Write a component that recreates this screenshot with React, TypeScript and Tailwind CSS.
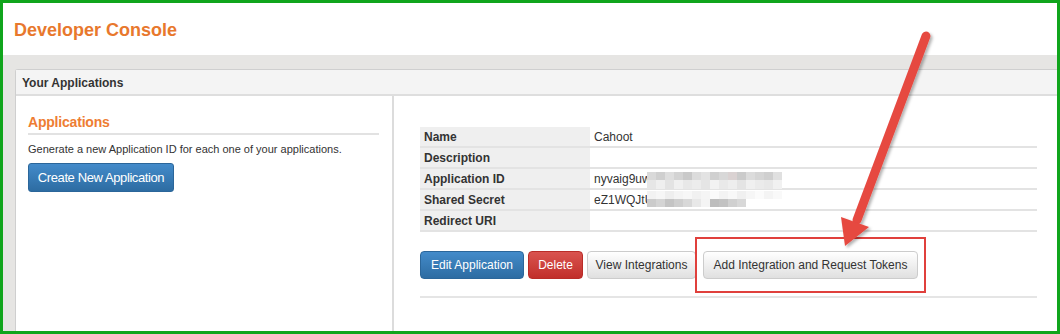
import React from "react";

const r1 = ["#d9d9d9","#cfcfcf","#dedede","#d3d3d3","#c9c9c9","#dcdcdc","#e3e3e3","#d0d0d0","#d8d8d8","#dad2d2","#cbcbcb","#dcdcdc","#d5d5d5","#cfcfcf","#e0e0e0"];
const r2 = ["#e6e6e6","#efefef","#e3e3e3","#f0f0f0","#e8e8e8","#ececec","#e5e5e5","#f2f2f2","#e9e9e9","#eeeeee","#e4e4e4","#f0f0f0","#ebebeb","#e8e8e8","#f1f1f1"];
const r3 = ["#f2f2f2","#f6f6f6","#eeeeee","#f4f4f4","#f7f7f7","#f1f1f1","#f5f5f5","#fafafa","#f3f3f3","#f8f8f8","#f0f0f0","#f6f6f6","#fbfbfb","#f4f4f4","#f9f9f9"];
const r4 = ["#cbcbcb","#d4d4d4","#c4c4c4","#cecece","#d8d8d8","#e8e8e8","#f4f4f4","#bdbdbd","#c2c2c2","#d0d0d0","#d8d8d8"];

const rows: [string, string][] = [
  ["Name", "Cahoot"],
  ["Description", ""],
  ["Application ID", "nyvaig9uw"],
  ["Shared Secret", "eZ1WQJtU"],
  ["Redirect URI", ""],
];

export default function App() {
  const blocks: React.ReactNode[] = [];
  const addRow = (cols: string[], y: number, h: number, key: string) => {
    cols.forEach((c, i) => {
      blocks.push(<rect key={key + i} x={647 + i * 9} y={y} width={9} height={h} fill={c} />);
    });
  };
  addRow(r1, 172, 8, "a");
  addRow(r2, 180, 9, "b");
  addRow(r3, 191, 8, "c");
  addRow(r4, 199, 8, "d");

  return (
    <div className="w-[1060px] h-[334px] border-[3px] border-[#10a51c] overflow-hidden relative flex flex-col bg-white font-['Liberation_Sans',Arial,sans-serif] text-[#333]">
      <div className="h-[52px] shrink-0 bg-white pl-[11px] pt-[17px]">
        <h1 className="text-[18px] leading-[20px] font-bold text-[#e8782d]">Developer Console</h1>
      </div>
      <div className="flex-1 min-h-0 bg-[#e6e5e3] pl-[12px] pt-[14px]">
        <div className="w-[1100px] h-full bg-white border-l border-t border-[#cfcfcf] rounded-tl-[3px] flex flex-col">
          <div className="h-[26px] shrink-0 bg-[#f4f4f4] border-b-2 border-[#dedede] pl-[6px] pt-[2px] flex items-center text-[12px] font-bold text-[#333]">
            Your Applications
          </div>
          <div className="flex flex-1">
            <div className="w-[378px] shrink-0 border-r-2 border-[#dcdcdc] pl-[12px] pr-[13px] pt-[18px]">
              <h2 className="text-[14px] leading-[16px] font-bold text-[#ee7d33] tracking-[-0.2px] pb-[3px] border-b-2 border-[#e2e2e2]">
                Applications
              </h2>
              <p className="mt-[7px] text-[11px] leading-[14px] text-[#333]">
                Generate a new Application ID for each one of your applications.
              </p>
              <button className="mt-[7px] w-[146px] h-[29px] rounded-[3px] border border-[#2b669a] bg-linear-to-b from-[#438bca] to-[#2d6ca2] text-white text-[13px] tracking-[-0.4px] flex items-center justify-center">
                Create New Application
              </button>
            </div>
            <div className="pl-[26px] pt-[31px]">
              <div className="w-[617px] text-[12px]">
                {rows.map(([k, v]) => (
                  <div key={k} className="flex h-[21px] border-b-2 border-[#e3e3e3]">
                    <div className="w-[170px] shrink-0 bg-[#efefef] px-[4px] pt-[1px] font-bold flex items-center">{k}</div>
                    <div className="px-[4px] pt-[1px] flex items-center">{v}</div>
                  </div>
                ))}
              </div>
              <div className="flex items-center mt-[19px] h-[28px] text-[12px]">
                <button className="w-[104px] h-[28px] rounded-[4px] border border-[#2b669a] bg-linear-to-b from-[#438bca] to-[#2d6ca2] text-white">
                  Edit Application
                </button>
                <button className="ml-[4px] w-[55px] h-[28px] rounded-[4px] border border-[#b92c28] bg-linear-to-b from-[#d9534f] to-[#c12e2a] text-white">
                  Delete
                </button>
                <button className="ml-[4px] w-[109px] h-[28px] rounded-[4px] border border-[#cccccc] bg-linear-to-b from-white to-[#e0e0e0] text-[#333]">
                  View Integrations
                </button>
                <button className="ml-[7px] w-[215px] h-[28px] rounded-[4px] border border-[#cccccc] bg-linear-to-b from-white to-[#e0e0e0] text-[#333]">
                  Add Integration and Request Tokens
                </button>
              </div>
              <div className="mt-[17px] w-[617px] border-b-2 border-[#e5e5e5]" />
            </div>
          </div>
        </div>
      </div>

      <div className="absolute left-[692px] top-[234px] w-[231px] h-[56px] border-2 border-[#e0403c]" />

      <svg className="absolute left-[-3px] top-[-3px] pointer-events-none" width="1060" height="334" viewBox="0 0 1060 334">
        <defs>
          <filter id="sh" x="-20%" y="-20%" width="140%" height="140%">
            <feDropShadow dx="2" dy="2" stdDeviation="1.5" floodColor="#000" floodOpacity="0.3" />
          </filter>
        </defs>
        {blocks}
        <g filter="url(#sh)">
          <line x1="926" y1="36" x2="857" y2="220" stroke="#e64840" strokeWidth="9" strokeLinecap="round" />
          <polygon points="841,217 869,227 845,246" fill="#e64840" />
        </g>
      </svg>
    </div>
  );
}
